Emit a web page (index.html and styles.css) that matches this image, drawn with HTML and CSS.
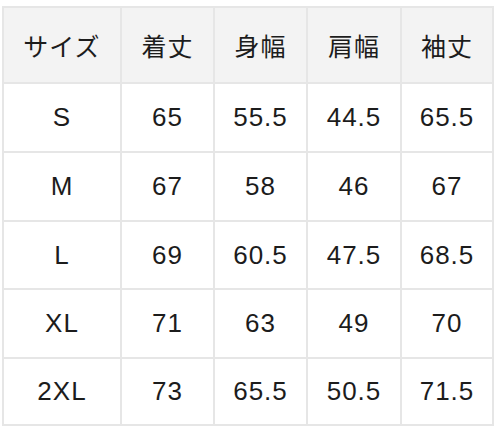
FILE: index.html
```html
<!DOCTYPE html>
<html lang="ja">
<head>
<meta charset="utf-8">
<link rel="stylesheet" href="styles.css">
</head>
<body>
<table class="size-table">
  <colgroup>
    <col class="col-size">
    <col class="col-num">
    <col class="col-num">
    <col class="col-num-wide">
    <col class="col-num-last">
  </colgroup>
  <thead>
    <tr class="head-row"><th>サイズ</th><th>着丈</th><th>身幅</th><th>肩幅</th><th>袖丈</th></tr>
  </thead>
  <tbody>
    <tr class="row-a"><td>S</td><td>65</td><td>55.5</td><td>44.5</td><td>65.5</td></tr>
    <tr class="row-a"><td>M</td><td>67</td><td>58</td><td>46</td><td>67</td></tr>
    <tr class="row-b"><td>L</td><td>69</td><td>60.5</td><td>47.5</td><td>68.5</td></tr>
    <tr class="row-a"><td>XL</td><td>71</td><td>63</td><td>49</td><td>70</td></tr>
    <tr class="row-c"><td>2XL</td><td>73</td><td>65.5</td><td>50.5</td><td>71.5</td></tr>
  </tbody>
</table>
</body>
</html>
```
FILE: styles.css
```css
html, body {
  background: #ffffff;
}
body {
  margin: 6px 2px 0 2px;
  font-family: "Liberation Sans", "Noto Sans CJK JP", Arial, sans-serif;
  color: #1c1c1c;
}
.size-table {
  border-collapse: separate;
  border-spacing: 2px;
  background: #e6e6e6;
  table-layout: fixed;
  width: 492px;
}
.col-size { width: 116px; }
.col-num { width: 91px; }
.col-num-wide { width: 92px; }
.col-num-last { width: 90px; }
.size-table th,
.size-table td {
  padding: 0;
  text-align: center;
  vertical-align: middle;
  font-weight: normal;
}
.size-table th {
  height: 74px;
  background: #f3f3f3;
  font-size: 25px;
  letter-spacing: 1px;
}
.size-table td {
  background: #ffffff;
  font-size: 26px;
  letter-spacing: 1px;
}
.row-a td { height: 67px; }
.row-b td { height: 66px; }
.row-c td { height: 65px; }
```
